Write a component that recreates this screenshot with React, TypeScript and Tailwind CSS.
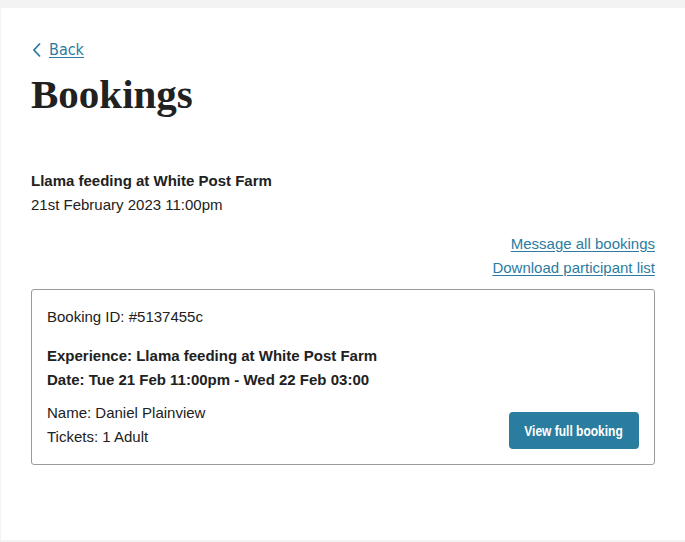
import React from 'react';

const Bookings: React.FC = () => {
  return (
    <div className="min-h-[542px] bg-[#f3f3f3] pt-2 font-['Liberation_Sans',Arial,sans-serif] text-[#212121]">
      <div className="ml-px h-[532px] bg-white px-[30px] pt-[32px]">
        {/* Back link */}
        <a href="#" className="flex h-5 items-center gap-[7px] text-[#2b7ca0]">
          <svg width="10" height="16" viewBox="0 0 10 16" fill="none" className="ml-px">
            <path d="M8 1.5 L2 8 L8 14.5" stroke="#2b7ca0" strokeWidth="1.8" />
          </svg>
          <span className="font-['DejaVu_Sans_Condensed',sans-serif] text-[16px] leading-5 underline underline-offset-2">
            Back
          </span>
        </a>

        <h1 className="mt-[12px] font-['Liberation_Serif',serif] text-[41px] leading-[44px] font-bold">
          Bookings
        </h1>

        <div className="mt-[53px] text-[15px] leading-6">
          <p className="font-bold">Llama feeding at White Post Farm</p>
          <p>21st February 2023 11:00pm</p>
        </div>

        <div className="mt-[15px] flex flex-col items-end text-[15px] leading-6 text-[#2b7ca0]">
          <a href="#" className="underline underline-offset-2">Message all bookings</a>
          <a href="#" className="underline underline-offset-2">Download participant list</a>
        </div>

        <div className="mt-[9px] rounded-[3px] border border-[#9a9a9a] px-[15px] pt-[15px] pb-[15px] text-[15px] leading-6">
          <p>Booking ID: #5137455c</p>
          <div className="mt-[15px] font-bold">
            <p>Experience: Llama feeding at White Post Farm</p>
            <p>Date: Tue 21 Feb 11:00pm - Wed 22 Feb 03:00</p>
          </div>
          <div className="mt-[9px] flex items-end justify-between">
            <div>
              <p>Name: Daniel Plainview</p>
              <p>Tickets: 1 Adult</p>
            </div>
            <button className="flex h-[37px] w-[130px] items-center justify-center whitespace-nowrap rounded-[4px] bg-[#2b7da0] text-[15px] font-bold text-white">
              <span className="inline-block scale-x-[0.8]">View full booking</span>
            </button>
          </div>
        </div>
      </div>
    </div>
  );
};

export default function App() {
  return <Bookings />;
}
